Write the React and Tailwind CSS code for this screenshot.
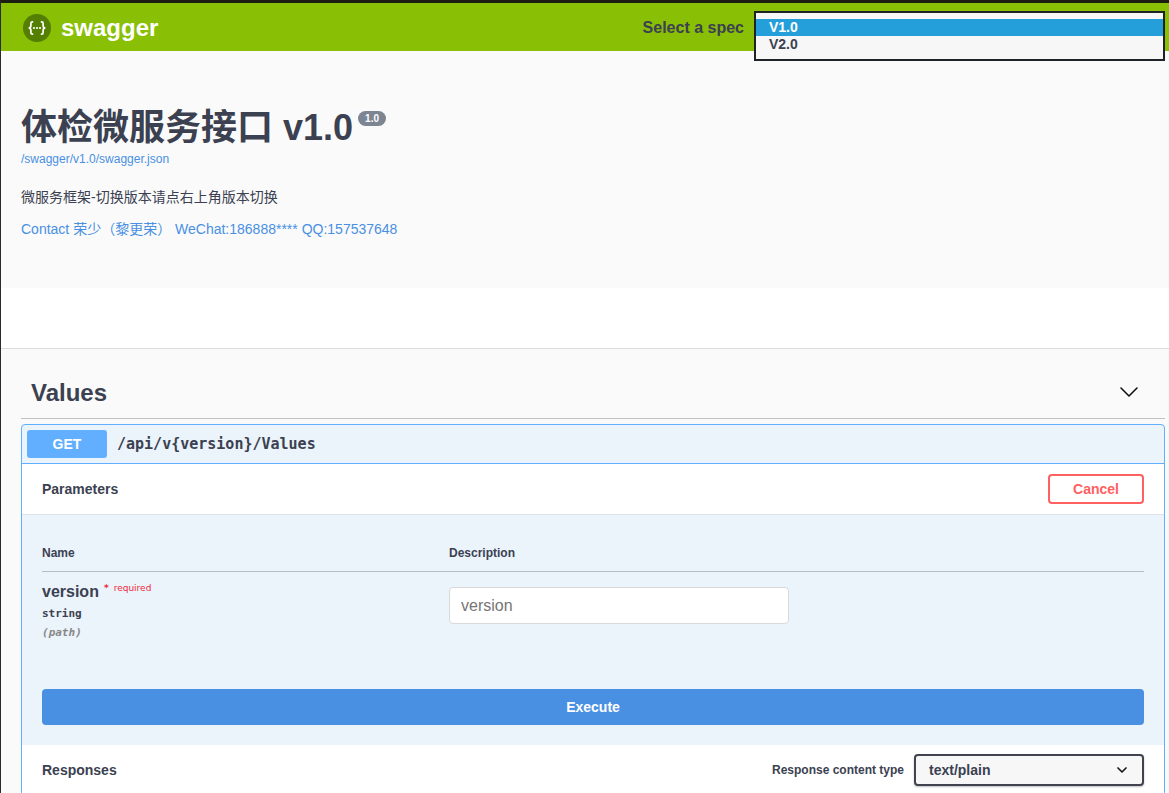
import React, { useState } from "react";

const specs = ["V1.0", "V2.0"];
const contentTypes = ["text/plain", "application/json", "text/json"];

const parameters = [
  { name: "version", type: "string", location: "path", required: true },
];

const Logo = () => (
  <a href="/swagger" className="flex items-center gap-2.5 text-2xl font-bold text-white">
    <svg className="size-7" viewBox="0 0 28 28" fill="none" aria-hidden="true">
      <circle cx="14" cy="14" r="14" fill="#547f00" />
      <g stroke="#fff" strokeWidth="1.7">
        <path d="M10.2 7.8H9.4Q7.9 7.8 7.9 9.3V11.6Q7.9 14 5.6 14Q7.9 14 7.9 16.4V18.7Q7.9 20.2 9.4 20.2H10.2" />
        <path d="M17.8 7.8H18.6Q20.1 7.8 20.1 9.3V11.6Q20.1 14 22.4 14Q20.1 14 20.1 16.4V18.7Q20.1 20.2 18.6 20.2H17.8" />
      </g>
      <g fill="#fff">
        <circle cx="11" cy="14" r="1.1" />
        <circle cx="14" cy="14" r="1.1" />
        <circle cx="17" cy="14" r="1.1" />
      </g>
    </svg>
    <span>swagger</span>
  </a>
);

const Topbar = ({ spec, onChange }) => (
  <header className="flex h-12 items-center justify-between bg-[#89bf04] pt-px pr-1 pl-[22px]">
    <Logo />
    <div className="flex items-center">
      <label htmlFor="spec" className="pr-2.5 font-bold">
        Select a spec
      </label>
      {/* Open list hangs over the page below the bar */}
      <div className="relative h-[34px] w-[411px]">
        <select
          id="spec"
          size={2}
          value={spec}
          onChange={(e) => onChange(e.target.value)}
          className="absolute inset-x-0 top-0 z-10 h-[50px] overflow-hidden border-2 border-[#1f2227] bg-[#f7f7f7] py-1.5 text-sm text-[#3b4151] outline-none"
        >
          {specs.map((s) => (
            <option
              key={s}
              value={s}
              className="h-[17px] min-h-0 px-[13px] py-0 leading-[17px] font-bold checked:bg-[#259fda] checked:bg-[linear-gradient(#259fda,#259fda)] checked:text-white"
            >
              {s}
            </option>
          ))}
        </select>
      </div>
    </div>
  </header>
);

const Info = () => (
  <section className="px-5 pt-[54px] pb-[47px]">
    <h1 className="flex items-start gap-[5px] text-4xl leading-[46px] font-bold">
      体检微服务接口 v1.0
      <span className="mt-1.5 rounded-full bg-[#7d8492] px-[7px] text-[10px] leading-[15px] text-white">
        1.0
      </span>
    </h1>
    <a href="/swagger/v1.0/swagger.json" className="block text-xs text-[#4990e2]">
      /swagger/v1.0/swagger.json
    </a>
    <p className="mt-[18px] text-sm leading-6">微服务框架-切换版本请点右上角版本切换</p>
    <a href="#contact" className="mt-2 block text-sm leading-6 text-[#4990e2]">
      Contact 荣少（黎更荣） WeChat:186888**** QQ:157537648
    </a>
  </section>
);

const ParameterTable = () => (
  <table className="w-full table-fixed text-left">
    <thead>
      <tr className="border-b border-[#3b4151]/30 text-xs">
        <th className="w-[407px] pb-2.5 leading-4">Name</th>
        <th className="pb-2.5 leading-4">Description</th>
      </tr>
    </thead>
    <tbody>
      {parameters.map((param) => (
        <tr key={param.name} className="align-top">
          <td className="pt-2.5 font-['DejaVu_Sans_Mono',monospace] text-[11px] leading-[19px] font-bold">
            <label
              htmlFor={param.name}
              className="mb-0.5 flex gap-[5px] font-['Liberation_Sans',sans-serif] text-base leading-5"
            >
              {param.name}
              {param.required && (
                <span className="flex gap-[5px] font-['DejaVu_Sans',sans-serif] text-[9px] leading-3 font-normal text-[#f0293e]">
                  <span className="font-bold">*</span> required
                </span>
              )}
            </label>
            <div>{param.type}</div>
            <div className="text-[#888] italic">({param.location})</div>
          </td>
          <td className="pt-[15px]">
            <input
              id={param.name}
              type="text"
              placeholder={param.name}
              className="h-[37px] w-[340px] rounded border border-[#d9d9d9] bg-white px-[11px] placeholder:text-[#757575]"
            />
          </td>
        </tr>
      ))}
    </tbody>
  </table>
);

const Operation = () => {
  const [contentType, setContentType] = useState(contentTypes[0]);

  return (
    <article className="mt-[5px] rounded border border-[#61affe] bg-[#ebf3fb]">
      <div className="flex items-center gap-2.5 border-b border-[#61affe] p-[5px]">
        <button className="h-7 w-20 rounded-[3px] bg-[#61affe] text-sm font-bold text-white">
          GET
        </button>
        <span className="font-['DejaVu_Sans_Mono',monospace] text-[15px] leading-5 font-bold">
          {"/api/v{version}/Values"}
        </span>
      </div>

      <div className="flex h-[51px] items-center justify-between border-b border-[#dde3ea] bg-white px-5">
        <h4 className="text-sm font-bold">Parameters</h4>
        <button className="h-[30px] w-24 rounded border-2 border-[#ff6060] text-sm font-bold text-[#ff6060]">
          Cancel
        </button>
      </div>

      <div className="px-5 pt-[30px] pb-5">
        <div className="h-36">
          <ParameterTable />
        </div>
        <button className="h-9 w-full rounded bg-[#4990e2] text-sm font-bold text-white">
          Execute
        </button>
      </div>

      <div className="flex h-[50px] items-center justify-between bg-white px-5">
        <h4 className="text-sm font-bold">Responses</h4>
        <div className="flex items-center gap-2.5">
          <label htmlFor="content-type" className="text-xs font-bold">
            Response content type
          </label>
          <div className="relative">
            <select
              id="content-type"
              value={contentType}
              onChange={(e) => setContentType(e.target.value)}
              className="block h-8 w-[230px] appearance-none rounded border-2 border-[#41444e] bg-[#f7f7f7] pr-10 pl-[13px] text-sm font-bold shadow-[0_1px_2px_rgba(0,0,0,0.25)]"
            >
              {contentTypes.map((type) => (
                <option key={type}>{type}</option>
              ))}
            </select>
            <svg
              className="pointer-events-none absolute top-3 right-4 h-2 w-3"
              viewBox="0 0 12 8"
              fill="none"
              aria-hidden="true"
            >
              <path
                d="M2 2L6 6L10 2"
                stroke="#1b1b1b"
                strokeWidth="1.7"
                strokeLinecap="round"
                strokeLinejoin="round"
              />
            </svg>
          </div>
        </div>
      </div>
    </article>
  );
};

const App = () => {
  const [spec, setSpec] = useState(specs[0]);

  return (
    <div className="min-h-screen border-t-3 border-l border-t-[#1c1e12] border-l-[#2b2b2b] bg-[#fafafa] font-['Liberation_Sans','Noto_Sans_CJK_SC',sans-serif] text-[#3b4151]">
      <Topbar spec={spec} onChange={setSpec} />
      <Info />

      {/* Empty scheme bar */}
      <div className="h-[61px] border-b border-[#dcdcdf] bg-white"></div>

      <main className="pr-1 pl-5">
        <div className="mt-[18px] flex h-[52px] items-center justify-between border-b border-[#3b4151]/30 pr-[26px] pl-2.5">
          <h3 className="text-2xl font-bold">Values</h3>
          <button aria-label="Collapse operation">
            <svg className="h-5 w-5" viewBox="0 0 20 20" fill="none">
              <path
                d="M2 5L10 13L18 5"
                stroke="#111"
                strokeWidth="1.6"
                strokeLinecap="round"
                strokeLinejoin="round"
              />
            </svg>
          </button>
        </div>
        <Operation />
      </main>
    </div>
  );
};

export default App;
